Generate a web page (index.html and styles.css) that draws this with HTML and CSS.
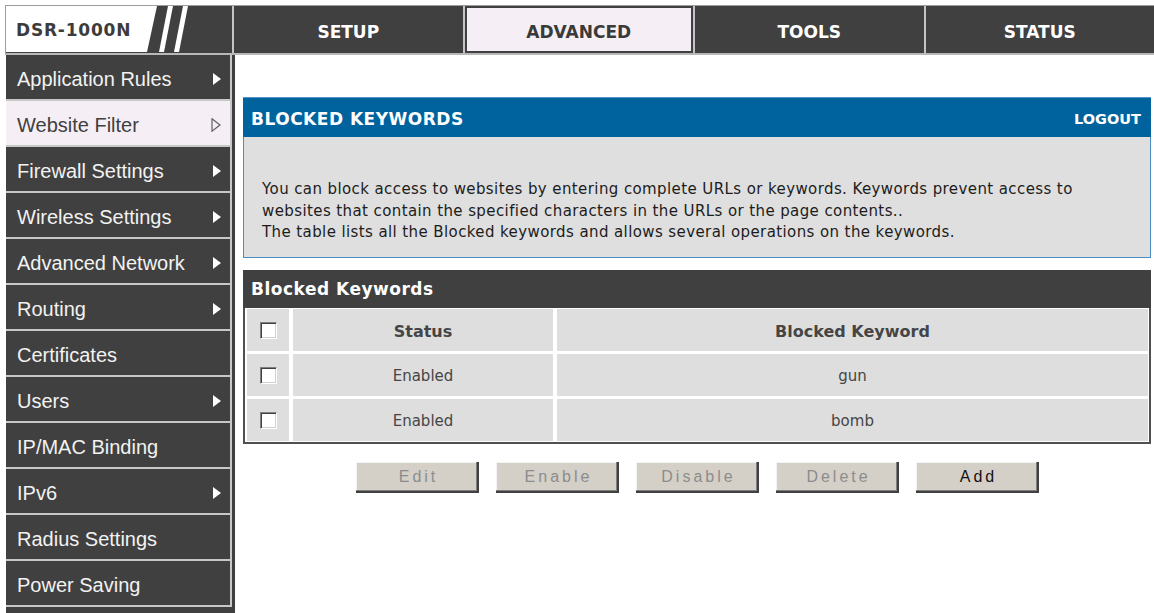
FILE: index.html
```html
<!DOCTYPE html>
<html lang="en">
<head>
<meta charset="utf-8">
<title>DSR-1000N - Blocked Keywords</title>
<link rel="stylesheet" href="styles.css">
</head>
<body>
<div class="page">
  <header class="topbar">
    <div class="brand">
      <span class="model">DSR-1000N</span>
      <svg class="brand-slashes" width="75" height="46" viewBox="0 0 75 46" aria-hidden="true">
        <polygon points="11,0 16,0 7,46 2,46" fill="#fff"/>
        <polygon points="26,0 31,0 22,46 17,46" fill="#fff"/>
      </svg>
    </div>
    <nav class="tabs">
      <a class="tab">SETUP</a>
      <a class="tab active">ADVANCED</a>
      <a class="tab">TOOLS</a>
      <a class="tab">STATUS</a>
    </nav>
  </header>

  <div class="layout">
    <aside class="sidebar">
      <ul class="menu">
        <li class="menu-item has-sub">Application Rules</li>
        <li class="menu-item has-sub current">Website Filter</li>
        <li class="menu-item has-sub">Firewall Settings</li>
        <li class="menu-item has-sub">Wireless Settings</li>
        <li class="menu-item has-sub">Advanced Network</li>
        <li class="menu-item has-sub">Routing</li>
        <li class="menu-item">Certificates</li>
        <li class="menu-item has-sub">Users</li>
        <li class="menu-item">IP/MAC Binding</li>
        <li class="menu-item has-sub">IPv6</li>
        <li class="menu-item">Radius Settings</li>
        <li class="menu-item">Power Saving</li>
      </ul>
    </aside>

    <main class="content">
      <section class="panel">
        <div class="panel-head">
          <h1 class="panel-title">BLOCKED KEYWORDS</h1>
          <a class="logout">LOGOUT</a>
        </div>
        <div class="panel-info">
          <p class="info-line">You can block access to websites by entering complete URLs or keywords. Keywords prevent access to</p>
          <p class="info-line">websites that contain the specified characters in the URLs or the page contents..</p>
          <p class="info-line">The table lists all the Blocked keywords and allows several operations on the keywords.</p>
        </div>
      </section>

      <section class="list">
        <div class="list-title">Blocked Keywords</div>
        <div class="grid">
          <div class="cell"><input class="check" type="checkbox"></div>
          <div class="cell head">Status</div>
          <div class="cell head">Blocked Keyword</div>

          <div class="cell"><input class="check" type="checkbox"></div>
          <div class="cell">Enabled</div>
          <div class="cell">gun</div>

          <div class="cell"><input class="check" type="checkbox"></div>
          <div class="cell">Enabled</div>
          <div class="cell">bomb</div>
        </div>
      </section>

      <div class="actions">
        <button class="btn" disabled>Edit</button>
        <button class="btn" disabled>Enable</button>
        <button class="btn" disabled>Disable</button>
        <button class="btn" disabled>Delete</button>
        <button class="btn primary">Add</button>
      </div>
    </main>
  </div>
</div>
</body>
</html>
```

FILE: styles.css
```css
html, body {
  margin: 0;
  padding: 0;
  background: #ffffff;
  font-family: "DejaVu Sans", "Noto Sans", sans-serif;
}

.page {
  padding: 5px 0 0 5px;
}

/* ---------- top bar ---------- */
.topbar {
  display: flex;
  height: 47px;
  background: #404040;
  border-top: 1px solid #9c9c9c;
  border-left: 1px solid #9c9c9c;
  border-bottom: 2px solid #b8b8b8;
}

.brand {
  display: flex;
  width: 226px;
  flex: none;
}

.model {
  box-sizing: border-box;
  width: 151px;
  height: 46px;
  padding: 2px 0 0 10px;
  display: flex;
  align-items: center;
  background: #ffffff;
  clip-path: polygon(0 0, 100% 0, calc(100% - 10px) 100%, 0 100%);
  color: #3c3c3c;
  font-weight: bold;
  font-size: 17px;
  letter-spacing: 0.8px;
}

.brand-slashes {
  display: block;
}

.tabs {
  flex: 1;
  display: flex;
}

.tab {
  flex: 1;
  display: flex;
  align-items: center;
  justify-content: center;
  padding-top: 4px;
  border-left: 2px solid #c4c4c4;
  color: #ffffff;
  font-weight: bold;
  font-size: 17px;
}

.tab.active {
  background: #f5eff5;
  color: #3a3a3a;
  box-shadow: inset 0 0 0 2px #404040;
}

/* ---------- layout ---------- */
.layout {
  display: flex;
  min-height: calc(100vh - 55px);
}

.sidebar {
  flex: none;
  width: 226px;
  margin-left: 1px;
  background: #404040;
  border-right: 3px solid #404040;
}

.menu {
  list-style: none;
  margin: 0;
  padding: 0;
}

.menu-item {
  box-sizing: border-box;
  height: 46px;
  display: flex;
  align-items: center;
  justify-content: space-between;
  padding: 4px 9px 0 11px;
  background: #404040;
  border-bottom: 2px solid #c8c8c8;
  border-right: 2px solid #c8c8c8;
  color: #f2f2f2;
  font-family: "Liberation Sans", Arial, sans-serif;
  font-size: 20px;
}

.menu-item.has-sub::after {
  content: "";
  width: 0;
  height: 0;
  border-top: 6.5px solid transparent;
  border-bottom: 6.5px solid transparent;
  border-left: 8px solid #ffffff;
}

.menu-item.current {
  background: #f5eff5;
  color: #404040;
}

.menu-item.current::after {
  width: 10px;
  height: 14px;
  border: none;
  background: url("data:image/svg+xml;utf8,<svg xmlns='http://www.w3.org/2000/svg' width='10' height='14'><polygon points='1,0.8 9,7 1,13.2' fill='none' stroke='%23606060' stroke-width='1.2'/></svg>") no-repeat center;
}

.content {
  flex: 1;
  padding: 42px 3px 0 8px;
}

/* ---------- title panel ---------- */
.panel-head {
  height: 40px;
  display: flex;
  align-items: center;
  justify-content: space-between;
  padding: 2px 10px 0 8px;
  box-sizing: border-box;
  background: #00639e;
  border-top: 1px solid #4f93c8;
  color: #ffffff;
}

.panel-title {
  margin: 0;
  font-size: 17px;
  font-weight: bold;
  letter-spacing: 0.5px;
}

.logout {
  font-size: 14.5px;
  font-weight: bold;
}

.panel-info {
  padding: 42px 18px 13px;
  background: #dfdfdf;
  border: 1px solid #4a8cc4;
  border-top: none;
  color: #1c1c1c;
  font-size: 15px;
  line-height: 21.5px;
  letter-spacing: 0.4px;
}

.info-line {
  margin: 0;
  white-space: nowrap;
}

/* ---------- keyword table ---------- */
.list {
  margin-top: 12px;
}

.list-title {
  height: 38px;
  display: flex;
  align-items: center;
  padding: 1px 0 0 8px;
  box-sizing: border-box;
  background: #404040;
  color: #ffffff;
  font-size: 17px;
  font-weight: bold;
  letter-spacing: 0.5px;
}

.grid {
  display: grid;
  grid-template-columns: 42px 260px 1fr;
  grid-auto-rows: 42px;
  gap: 3px 4px;
  padding: 1px 1px 1px 2px;
  border: 2px solid #505050;
  border-top: none;
}

.cell {
  display: flex;
  align-items: center;
  justify-content: center;
  padding-top: 2px;
  background: #dedede;
  color: #454545;
  font-size: 15px;
}

.cell.head {
  padding-top: 3px;
  font-size: 16px;
  font-weight: bold;
}

.check {
  appearance: none;
  -webkit-appearance: none;
  box-sizing: border-box;
  width: 17px;
  height: 17px;
  margin: 0;
  background: #ffffff;
  border: 1px solid;
  border-color: #808080 #ffffff #ffffff #808080;
  box-shadow: inset 1px 1px 0 #404040, inset -1px -1px 0 #d4d0c8;
}

/* ---------- buttons ---------- */
.actions {
  display: flex;
  justify-content: center;
  gap: 17px;
  margin-top: 18px;
}

.btn {
  width: 123px;
  height: 31px;
  padding: 0 0 1px 3px;
  background: #d4d0c8;
  border: none;
  box-shadow: inset -2px -2px 0 #404040, inset -3px -3px 0 #808080, inset 1px 1px 0 #f4f4f4;
  color: #8c8c8c;
  font-family: "Liberation Sans", Arial, sans-serif;
  font-size: 16px;
  letter-spacing: 3px;
}

.btn.primary {
  color: #111111;
}
```
